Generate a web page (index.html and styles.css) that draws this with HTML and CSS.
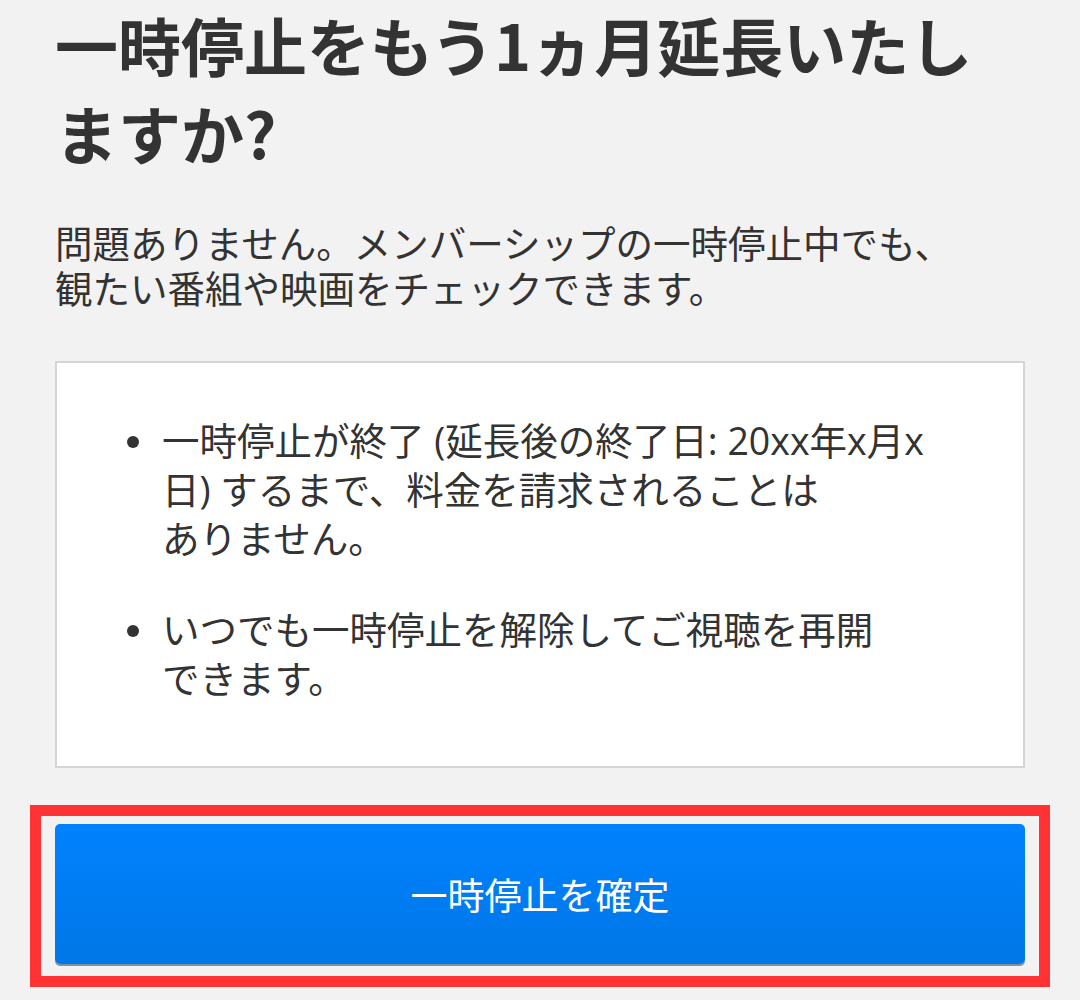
FILE: index.html
```html
<!DOCTYPE html>
<html lang="ja">
<head>
    <title>一時停止の延長</title>
    <meta charset="UTF-8">
    <meta name="viewport" content="width=device-width, initial-scale=1.0">
    <link rel="stylesheet" href="styles.css">
</head>
<body>
    <div class="container">
        <h1>一時停止をもう1ヵ月延長いたし<br>ますか?</h1>

        <p class="lead">問題ありません。メンバーシップの一時停止中でも、<br>観たい番組や映画をチェックできます。</p>

        <div class="info-card">
            <ul class="info-list">
                <li>一時停止が終了 (延長後の終了日: 20xx年x月x<br>日) するまで、料金を請求されることは<br>ありません。</li>
                <li>いつでも一時停止を解除してご視聴を再開<br>できます。</li>
            </ul>
        </div>

        <div class="highlight">
            <button class="confirm-btn">一時停止を確定</button>
        </div>
    </div>
</body>
</html>
```

FILE: styles.css
```css
:root {
    --page-bg: #f2f2f2;
    --text-main: #333333;
    --card-border: #d5d5d5;
    --blue-top: #0082ff;
    --blue-bottom: #0077e6;
    --mark-red: #ff3333;
}

* {
    margin: 0;
    padding: 0;
    box-sizing: border-box;
}

body {
    font-family: "Open Sans", "Noto Sans CJK JP", sans-serif;
    background-color: var(--page-bg);
    color: var(--text-main);
    min-height: 100vh;
}

.container {
    padding: 0 55px;
}

h1 {
    font-family: "Noto Sans CJK JP", sans-serif;
    font-size: 63px;
    font-weight: 700;
    line-height: 88px;
    color: var(--text-main);
}

.lead {
    margin-top: 45px;
    font-size: 37.5px;
    line-height: 45px;
}

.info-card {
    margin-top: 50px;
    background: #ffffff;
    border: 2px solid var(--card-border);
    padding: 53px 20px 63px 70px;
}

.info-list {
    list-style: none;
}

.info-list li {
    display: flex;
    gap: 23px;
    font-size: 37.5px;
    line-height: 49px;
}

.info-list li + li {
    margin-top: 42px;
}

.info-list li::before {
    content: '';
    flex-shrink: 0;
    width: 12px;
    height: 12px;
    margin-top: 20px;
    border-radius: 50%;
    background: var(--text-main);
}

/* red annotation frame around the button */
.highlight {
    margin: 37px -25px 0;
    border: 11px solid var(--mark-red);
    padding: 8px 14px 12px;
}

.confirm-btn {
    display: block;
    width: 100%;
    height: 140px;
    border: none;
    border-radius: 5px;
    font-family: "Noto Sans CJK JP", sans-serif;
    font-size: 37px;
    color: #ffffff;
    background: linear-gradient(to bottom, var(--blue-top), var(--blue-bottom));
    box-shadow: 0 2px 0 rgba(40, 60, 90, 0.55);
    cursor: pointer;
}
```
